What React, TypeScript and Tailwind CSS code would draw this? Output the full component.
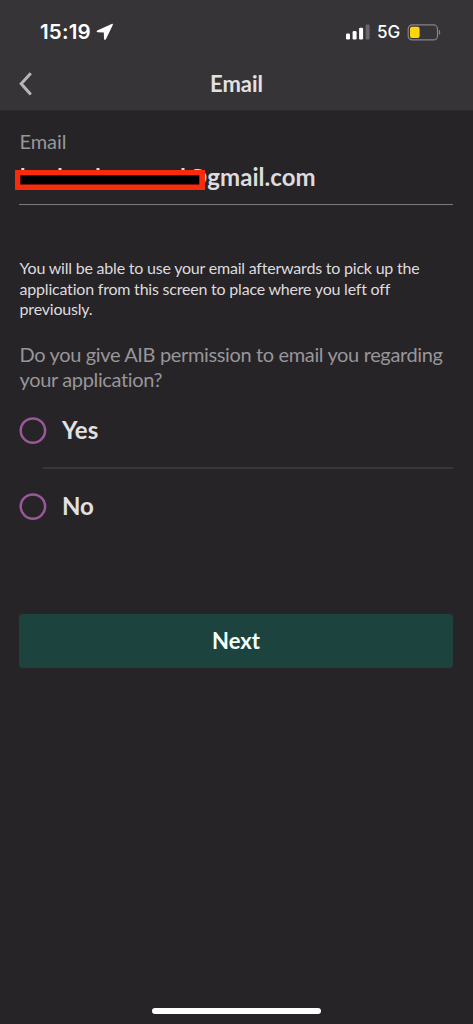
import React from "react";

function StatusBar() {
  return (
    <div className="flex h-[56px] items-start justify-between pt-[20px] pl-[40px] pr-[32px] font-['Inter','Liberation_Sans',sans-serif] text-white">
      <div className="flex items-center">
        <span className="w-[51px] whitespace-nowrap text-[20.5px] leading-[24px] font-semibold tracking-[0.2px]">15:19</span>
        <svg className="ml-[5px]" width="18" height="18" viewBox="0 0 18 18" fill="white">
          <path d="M15.6 .9 1.3 7.4c-1 .5-.8 1.8.4 1.8l6.1.3.2 6.3c0 1.2 1.4 1.4 1.9.4L16.8 2.1c.4-.9-.3-1.6-1.2-1.2Z" />
        </svg>
      </div>
      <div className="flex h-[24px] items-center">
        <svg width="24" height="16" viewBox="0 0 24 16" fill="white">
          <rect x="0" y="9.5" width="4" height="6" rx="1.2" />
          <rect x="6.6" y="7" width="4" height="8.5" rx="1.2" />
          <rect x="13.1" y="3.8" width="4" height="11.7" rx="1.2" />
          <rect x="19.6" y="0.5" width="4" height="15" rx="1.2" fill="#68666a" />
        </svg>
        <span className="ml-[7px] w-[24px] whitespace-nowrap text-[17px] leading-[24px] font-medium">5G</span>
        <svg className="ml-[6px]" width="34" height="17" viewBox="0 0 34 17">
          <rect x="1.2" y="0.9" width="29.3" height="15" rx="4" fill="none" stroke="#858387" strokeWidth="1.2" />
          <rect x="3" y="2.7" width="9.6" height="11.4" rx="2" fill="#ffd60a" />
          <path d="M31.8 5.8c1.9.7 1.9 4.5 0 5.2Z" fill="#858387" />
        </svg>
      </div>
    </div>
  );
}

function Choice({ label }: { label: string }) {
  return (
    <label className="flex h-[28px] items-center">
      <svg width="28" height="28" viewBox="0 0 28 28" fill="none" stroke="#99589a" strokeWidth="2.5">
        <circle cx="13.9" cy="13.6" r="12.2" />
      </svg>
      <span className="ml-[15px] -translate-y-px text-[24px] leading-[28px] font-bold text-[#e2e0e3]">{label}</span>
    </label>
  );
}

export default function App() {
  return (
    <div className="flex h-[1024px] w-[473px] flex-col overflow-hidden bg-[#262427] font-['Lato','Liberation_Sans',sans-serif]">
      <header className="h-[111px] shrink-0 border-b border-[#2c2a2d] bg-[#363436]">
        <StatusBar />
        <div className="grid h-[55px] grid-cols-[60px_1fr_60px] items-center">
          <button className="ml-[18px] w-[16px]" aria-label="Back">
            <svg width="16" height="26" viewBox="0 0 16 26" fill="none" stroke="#b8b6b9" strokeWidth="3">
              <path d="M12.8 2.2 3.2 12.8l9.6 10.6" />
            </svg>
          </button>
          <h1 className="text-center text-[22px] leading-[26px] font-bold text-[#e2e0e3]">Email</h1>
        </div>
      </header>
      <main className="flex grow flex-col pt-[18px] pr-[20px] pl-[19px]">
        <div className="pl-[0.6px] text-[20px] leading-[24px] tracking-[-0.1px] text-[#98969a]">Email</div>
        <div className="relative flex h-[52px] items-start border-b border-[#7b797c] pt-[9px] pl-[168px]">
          <span className="text-[24px] leading-[30px] font-bold tracking-[0.05px] text-[#dddbde]">@gmail.com</span>
          <svg className="absolute top-[14px] left-[1px]" width="168" height="5" viewBox="0 0 168 5" fill="#dddbde">
            <rect x="1.3" y="1" width="3" height="4" />
            <rect x="38.5" y="1" width="3" height="4" />
            <rect x="76.5" y="1" width="3" height="4" />
            <rect x="161.5" y="1" width="3" height="4" />
          </svg>
          <svg className="absolute top-[17px] left-[-4px]" width="190" height="20" viewBox="0 0 190 20">
            <rect width="190" height="20" fill="#f92b0b" />
            <rect x="5.3" y="5.3" width="179" height="9.2" fill="black" />
          </svg>
        </div>
        <p className="mt-[53px] pl-[0.6px] whitespace-nowrap text-[16px] leading-[20.6px] tracking-[-0.21px] text-[#dddbde]">
          You will be able to use your email afterwards to pick up the<br />
          application from this screen to place where you left off<br />
          previously.
        </p>
        <p className="mt-[22.5px] pl-[0.6px] whitespace-nowrap text-[20px] leading-[24.5px] tracking-[-0.36px] text-[#98969a]">
          Do you give AIB permission to email you regarding<br />
          your application?
        </p>
        <div className="mt-[25.5px]">
          <Choice label="Yes" />
          <div className="mt-[22px] mb-[24px] ml-[24px] h-[2px] bg-[#39373a]" />
          <Choice label="No" />
        </div>
        <button className="mt-[93.5px] h-[54px] shrink-0 rounded-[4px] bg-[#1d433e] pb-px text-[22px] leading-[26px] font-bold text-[#f2fffb]">
          Next
        </button>
        <div className="mt-auto mb-[10px] h-[6px] w-[169px] shrink-0 self-center rounded-full bg-white" />
      </main>
    </div>
  );
}
